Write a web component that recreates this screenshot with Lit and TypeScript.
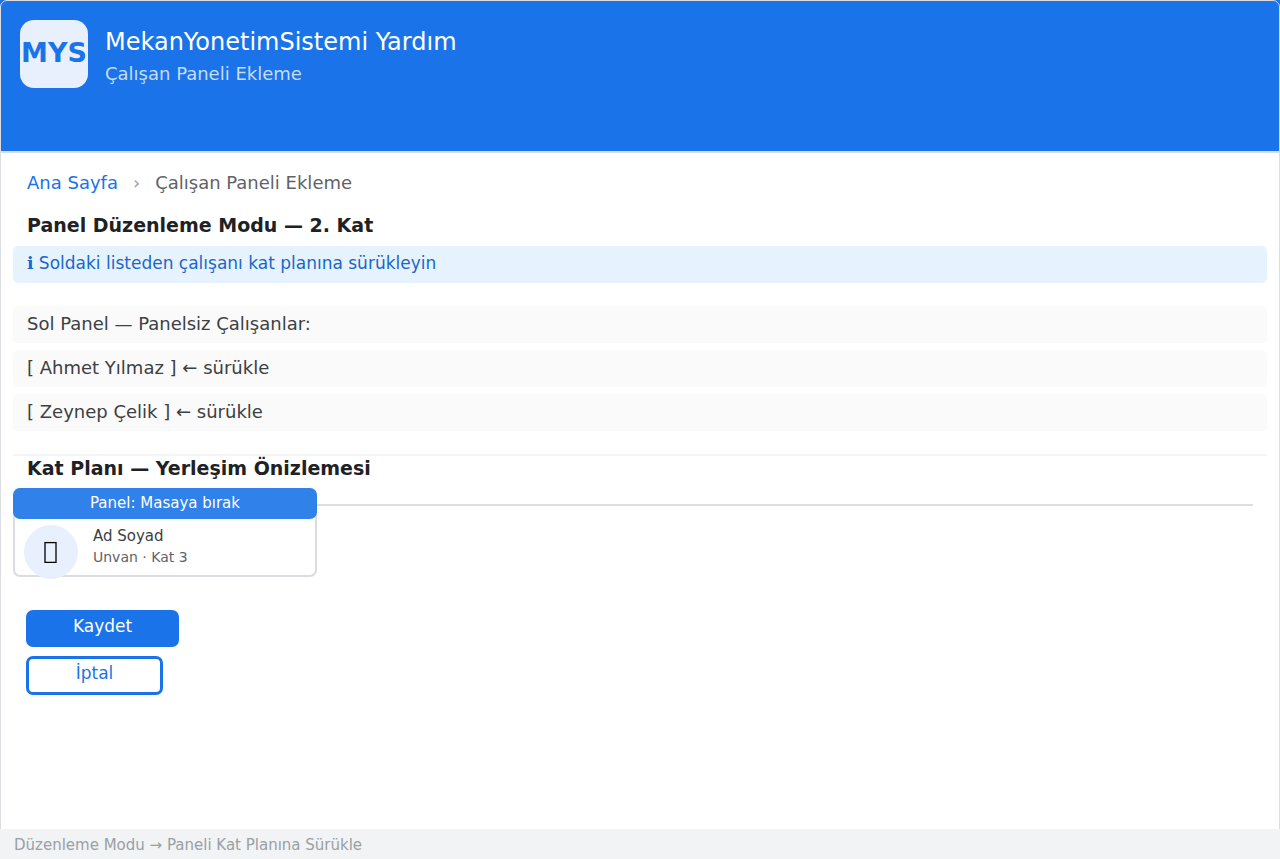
import { LitElement, html, css } from "lit";
import { customElement, state } from "lit/decorators.js";

@customElement("app-root")
export class AppRoot extends LitElement {
  @state() private employees = ["Ahmet Yılmaz", "Zeynep Çelik"];

  static styles = css`
    :host {
      display: flex;
      flex-direction: column;
      position: relative;
      min-height: 100vh;
      box-sizing: border-box;
      background: #fff;
      color: #3c4043;
      font-family: "DejaVu Sans", sans-serif;
      font-size: 18px;
    }
    :host::after {
      content: "";
      position: absolute;
      inset: 0;
      border: 1px solid #dadce0;
      border-radius: 7px;
      pointer-events: none;
    }
    * {
      box-sizing: border-box;
      margin: 0;
    }
    .header {
      display: flex;
      gap: 17px;
      padding: 20px 20px 63px;
      background: #1a73e8;
      border-bottom: 2px solid #dadce0;
    }
    .logo {
      width: 68px;
      height: 68px;
      padding-bottom: 3px;
      display: grid;
      place-items: center;
      border-radius: 14px;
      background: #e8f0fe;
      color: #1a73e8;
      font-size: 27px;
      font-weight: 700;
    }
    .titles {
      display: flex;
      flex-direction: column;
      gap: 4px;
      padding-top: 8px;
      line-height: 28px;
    }
    .title {
      font-size: 24px;
      font-weight: 400;
      line-height: 28px;
      color: #fff;
    }
    .subtitle {
      color: #c6dcf9;
    }
    .main {
      flex: 1;
      padding: 18px 13px;
    }
    .crumbs {
      display: flex;
      gap: 15px;
      padding: 0 14px;
      line-height: 24px;
      color: #5f6368;
    }
    .crumbs a {
      color: #1a73e8;
      text-decoration: none;
    }
    .sep {
      color: #9aa0a6;
    }
    .heading {
      padding: 0 14px;
      font-size: 19px;
      line-height: 24px;
      font-weight: 700;
      color: #202124;
    }
    .first {
      margin-top: 18px;
    }
    .info {
      margin-top: 9px;
      padding: 0 14px 2px;
      border-radius: 5px;
      background: #e6f3fe;
      color: #1967c8;
      font-size: 17px;
      line-height: 35px;
    }
    .list {
      display: grid;
      gap: 7px;
      margin: 23px 0;
      padding: 0;
      list-style: none;
    }
    .list li {
      padding: 0 14px 2px;
      border-radius: 5px;
      background: #fafafa;
      line-height: 35px;
    }
    .plan {
      border-top: 2px solid #f3f4f5;
    }
    .stage {
      display: flex;
      margin-top: 8px;
    }
    .rail {
      flex: 1;
      height: 2px;
      margin: 16px 14px 0 0;
      background: #dedede;
    }
    .card {
      width: 304px;
      height: 89px;
      border-radius: 7px;
      background: #fff;
      box-shadow: inset 0 0 0 2px #dadce0;
    }
    .drop {
      border-radius: 7px;
      background: #3081ea;
      color: #fff;
      font-size: 15px;
      line-height: 31px;
      text-align: center;
    }
    .person {
      display: flex;
      gap: 15px;
      padding: 6px 11px 0;
    }
    .avatar {
      width: 54px;
      height: 54px;
      display: grid;
      place-items: center;
      border-radius: 50%;
      background: #e8f0fe;
    }
    .name {
      font-size: 15px;
      line-height: 22px;
    }
    .role {
      font-size: 14px;
      line-height: 20px;
      color: #5f6368;
    }
    .actions {
      display: grid;
      justify-items: start;
      gap: 9px;
      margin-top: 33px;
      padding-left: 13px;
    }
    button {
      border-radius: 7px;
      padding: 0 0 6px;
      font-family: inherit;
      font-size: 17px;
      cursor: pointer;
    }
    .save {
      width: 153px;
      height: 37px;
      border: 0;
      background: #1a73e8;
      color: #fff;
    }
    .cancel {
      width: 137px;
      height: 39px;
      border: 3px solid #1a73e8;
      background: #fff;
      color: #1a73e8;
    }
    .footer {
      position: relative;
      z-index: 1;
      padding: 2px 14px 0;
      background: #f1f3f4;
      color: #9aa0a6;
      font-size: 15px;
      line-height: 28px;
    }
  `;

  render() {
    return html`
      <header class="header">
        <div class="logo">MYS</div>
        <div class="titles">
          <h1 class="title">MekanYonetimSistemi Yardım</h1>
          <p class="subtitle">Çalışan Paneli Ekleme</p>
        </div>
      </header>
      <main class="main">
        <nav class="crumbs">
          <a href="#">Ana Sayfa</a>
          <span class="sep">›</span>
          <span>Çalışan Paneli Ekleme</span>
        </nav>
        <h2 class="heading first">Panel Düzenleme Modu — 2. Kat</h2>
        <p class="info">ℹ Soldaki listeden çalışanı kat planına sürükleyin</p>
        <ul class="list">
          <li>Sol Panel — Panelsiz Çalışanlar:</li>
          ${this.employees.map((name) => html`<li>[ ${name} ] ← sürükle</li>`)}
        </ul>
        <section class="plan">
          <h2 class="heading">Kat Planı — Yerleşim Önizlemesi</h2>
          <div class="stage">
            <div class="card">
              <div class="drop">Panel: Masaya bırak</div>
              <div class="person">
                <div class="avatar">
                  <svg width="14" height="22" viewBox="0 0 14 22" aria-hidden="true">
                    <rect x="1" y="1.6" width="11" height="19.8" fill="none" stroke="#000" stroke-width="1.3" />
                  </svg>
                </div>
                <div>
                  <p class="name">Ad Soyad</p>
                  <p class="role">Unvan · Kat 3</p>
                </div>
              </div>
            </div>
            <div class="rail"></div>
          </div>
        </section>
        <div class="actions">
          <button class="save" type="button">Kaydet</button>
          <button class="cancel" type="button">İptal</button>
        </div>
      </main>
      <footer class="footer">Düzenleme Modu → Paneli Kat Planına Sürükle</footer>
    `;
  }
}
